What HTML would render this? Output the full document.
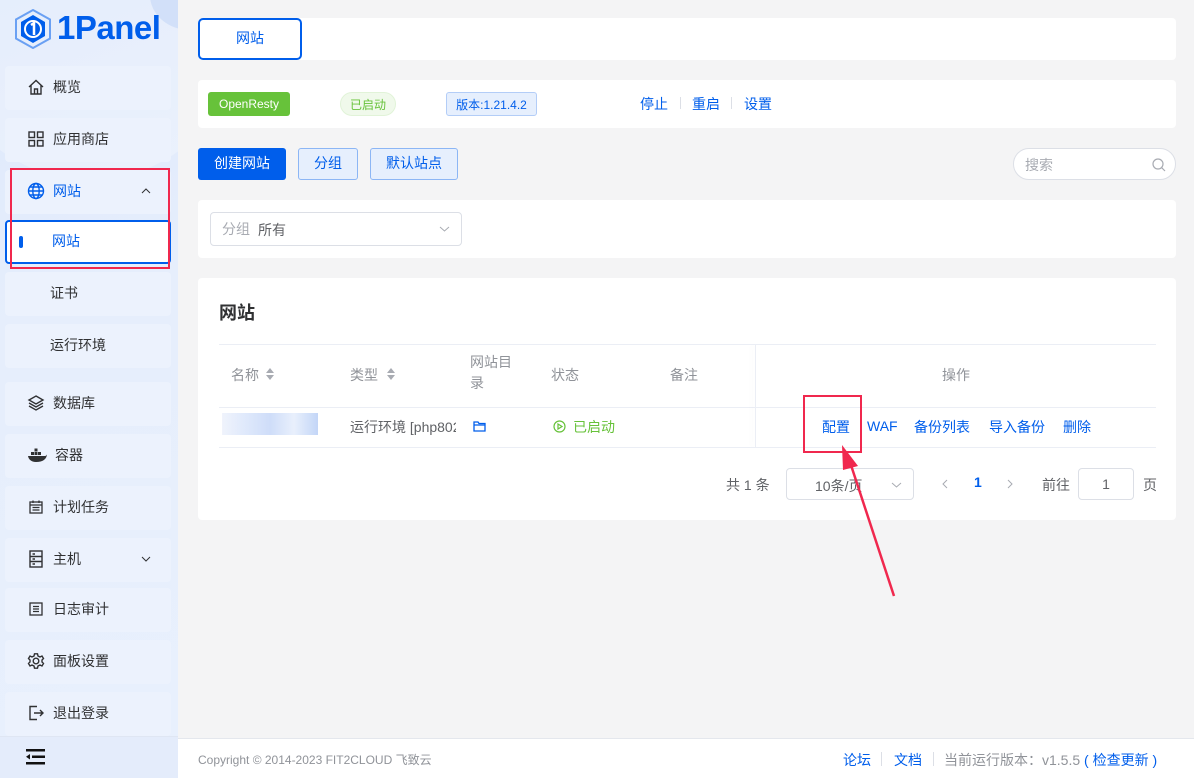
<!DOCTYPE html>
<html><head><meta charset="utf-8">
<style>
*{box-sizing:border-box;margin:0;padding:0}
body{width:1194px;height:778px;overflow:hidden;background:#f4f4f5;font-family:"Liberation Sans","Noto Sans CJK SC",sans-serif;font-size:14px;color:#303133;position:relative}
.abs{position:absolute}
#side{position:absolute;left:0;top:0;width:178px;height:778px;background:linear-gradient(160deg,#dde8fb 0%,#e6eefc 40%,#e8f0fd 100%);overflow:hidden}
.mi{position:absolute;left:5px;width:166px;height:44px;background:#ecf2fd;border-radius:4px;display:flex;align-items:center;padding-left:22px;font-size:14px;color:#303133;padding-bottom:2px}
.mi svg{margin-right:8px}
.mi.sub{padding-left:45px}
.card{position:absolute;background:#fff;border-radius:4px}
.blue{color:#005eeb}
.btn{position:absolute;height:32px;border-radius:3px;display:flex;align-items:center;justify-content:center;font-size:14px;padding-bottom:2px}
.chev{position:absolute}
</style></head><body>
<div id="side">
  <div class="abs" style="left:-60px;top:-120px;width:300px;height:300px;border-radius:50%;background:rgba(255,255,255,0.25)"></div>
  <div class="abs" style="left:150px;top:-40px;width:80px;height:70px;border-radius:50%;background:rgba(190,210,245,0.5)"></div>
  <svg class="abs" style="left:14px;top:9px" width="38" height="40" viewBox="0 0 38 40"><polygon points="19,1 36,10.5 36,29.5 19,39 2,29.5 2,10.5" fill="none" stroke="#6aa0f3" stroke-width="2"/><polygon points="19,6 31,13 31,27 19,34 7,27 7,13" fill="#005eeb"/><circle cx="19" cy="20" r="8" fill="none" stroke="#fff" stroke-width="2"/><path d="M17 16 L20 14 L20 26" stroke="#fff" stroke-width="2.5" fill="none"/></svg>
  <div class="abs" style="left:57px;top:9px;font-size:33px;font-weight:bold;color:#005eeb;letter-spacing:-0.5px">1Panel</div>

  <div class="mi" style="top:66px"><svg width="18" height="18" viewBox="0 0 18 18" fill="none" stroke="#303133" stroke-width="1.4"><path d="M2 9 L9 2.5 L16 9 M4 7.5 V16 H14 V7.5 M7.5 16 V11 H10.5 V16"/></svg>概览</div>
  <div class="mi" style="top:118px"><svg width="18" height="18" viewBox="0 0 18 18" fill="none" stroke="#303133" stroke-width="1.4"><rect x="2" y="2" width="5.5" height="5.5"/><rect x="10.5" y="2" width="5.5" height="5.5"/><rect x="2" y="10.5" width="5.5" height="5.5"/><rect x="10.5" y="10.5" width="5.5" height="5.5"/></svg>应用商店</div>
  <div class="mi blue" style="top:170px"><svg width="18" height="18" viewBox="0 0 18 18" fill="none" stroke="#005eeb" stroke-width="1.4"><circle cx="9" cy="9" r="7.5"/><ellipse cx="9" cy="9" rx="3.2" ry="7.5"/><path d="M1.5 9 H16.5 M3 5 H15 M3 13 H15"/></svg>网站<svg class="chev" style="left:136px;top:18px" width="10" height="6" viewBox="0 0 10 6" fill="none" stroke="#303133" stroke-width="1"><path d="M1 5 L5 1 L9 5"/></svg></div>
  <div class="mi sub blue" style="top:220px;background:#fff;border:2px solid #005eeb;left:5px;width:166px"><span class="abs" style="left:12px;top:14px;width:4px;height:12px;background:#005eeb;border-radius:2px"></span>网站</div>
  <div class="abs" style="left:10px;top:168px;width:160px;height:101px;border:2px solid #f0284e"></div>
  <div class="mi sub" style="top:272px">证书</div>
  <div class="mi sub" style="top:324px">运行环境</div>
  <div class="mi" style="top:382px"><svg width="18" height="18" viewBox="0 0 18 18" fill="none" stroke="#303133" stroke-width="1.4"><path d="M9 2 L16 6 L9 10 L2 6 Z M2 9 L9 13 L16 9 M2 12 L9 16 L16 12"/></svg>数据库</div>
  <div class="mi" style="top:434px"><svg width="20" height="16" viewBox="0 0 20 16" fill="#303133"><rect x="4" y="5" width="3" height="3"/><rect x="7.5" y="5" width="3" height="3"/><rect x="7.5" y="1.5" width="3" height="3"/><rect x="11" y="5" width="3" height="3"/><path d="M1 9 H18 C19 9 19.5 8 20 7.5 C19.5 12 16 15 9 15 C4 15 1.5 12 1 9Z"/></svg>容器</div>
  <div class="mi" style="top:486px"><svg width="18" height="18" viewBox="0 0 18 18" fill="none" stroke="#303133" stroke-width="1.3"><rect x="3" y="4" width="12" height="11"/><path d="M6 2.5 V5 M12 2.5 V5 M3 7 H15 M5.5 9.5 H12.5 M5.5 12 H12.5"/></svg>计划任务</div>
  <div class="mi" style="top:538px"><svg width="18" height="20" viewBox="0 0 18 20" fill="none" stroke="#303133" stroke-width="1.4"><rect x="3" y="2" width="12" height="16"/><path d="M3 7.5 H15 M3 12.5 H15 M5.5 5 H8 M5.5 10 H8 M5.5 15 H8"/></svg>主机<svg class="chev" style="left:136px;top:18px" width="10" height="6" viewBox="0 0 10 6" fill="none" stroke="#303133" stroke-width="1"><path d="M1 1 L5 5 L9 1"/></svg></div>
  <div class="mi" style="top:588px"><svg width="18" height="18" viewBox="0 0 18 18" fill="none" stroke="#303133" stroke-width="1.3"><rect x="3" y="3" width="12" height="12"/><path d="M6 6.5 H12 M6 9 H12 M6 11.5 H12"/></svg>日志审计</div>
  <div class="mi" style="top:640px"><svg width="18" height="18" viewBox="0 0 18 18" fill="none" stroke="#303133" stroke-width="1.4"><circle cx="9" cy="9" r="2.8"/><path d="M7.5 1.8 H10.5 L11 4 L13 5 L15 4 L16.5 6.5 L15 8 V10 L16.5 11.5 L15 14 L13 13 L11 14 L10.5 16.2 H7.5 L7 14 L5 13 L3 14 L1.5 11.5 L3 10 V8 L1.5 6.5 L3 4 L5 5 L7 4 Z"/></svg>面板设置</div>
  <div class="mi" style="top:692px"><svg width="18" height="18" viewBox="0 0 18 18" fill="none" stroke="#303133" stroke-width="1.4"><path d="M10 2.5 H3 V15.5 H10 M7 9 H16 M13 6 L16 9 L13 12"/></svg>退出登录</div>
  <div class="abs" style="left:0;top:736px;width:178px;height:42px;background:#e4ecfb;border-top:1px solid #dfe6f3"></div>
  <svg class="abs" style="left:26px;top:749px" width="20" height="16" viewBox="0 0 20 16" fill="#111"><rect x="0" y="0" width="19" height="2.5"/><rect x="6" y="6.5" width="13" height="2.5"/><rect x="0" y="13" width="19" height="2.5"/><path d="M0 7.8 L4 5 V10.5Z"/></svg>
</div>

<!-- main -->
<div class="card" style="left:198px;top:18px;width:978px;height:42px"></div>
<div class="abs blue" style="left:198px;top:18px;width:104px;height:42px;border:2px solid #005eeb;border-radius:5px;display:flex;align-items:center;justify-content:center;font-size:14px;padding-bottom:2px">网站</div>

<div class="card" style="left:198px;top:80px;width:978px;height:48px"></div>
<div class="abs" style="left:208px;top:92px;width:82px;height:24px;background:#67c23a;color:#fff;border-radius:3px;font-size:12px;display:flex;align-items:center;justify-content:center">OpenResty</div>
<div class="abs" style="left:340px;top:92px;width:56px;height:24px;background:#f0f9eb;border:1px solid #e1f3d8;color:#67c23a;border-radius:12px;font-size:12px;display:flex;align-items:center;justify-content:center">已启动</div>
<div class="abs" style="left:446px;top:92px;width:91px;height:24px;background:#e6effd;border:1px solid #b3cdf7;color:#005eeb;border-radius:3px;font-size:12px;display:flex;align-items:center;justify-content:center">版本:1.21.4.2</div>
<div class="abs blue" style="left:640px;top:94px;font-size:14px">停止</div>
<div class="abs" style="left:680px;top:97px;width:1px;height:12px;background:#dcdfe6"></div>
<div class="abs blue" style="left:692px;top:94px;font-size:14px">重启</div>
<div class="abs" style="left:731px;top:97px;width:1px;height:12px;background:#dcdfe6"></div>
<div class="abs blue" style="left:744px;top:94px;font-size:14px">设置</div>

<div class="btn" style="left:198px;top:148px;width:88px;background:#005eeb;color:#fff">创建网站</div>
<div class="btn blue" style="left:298px;top:148px;width:60px;background:#e6effd;border:1px solid #8cb6f5">分组</div>
<div class="btn blue" style="left:370px;top:148px;width:88px;background:#e6effd;border:1px solid #8cb6f5">默认站点</div>
<div class="abs" style="left:1013px;top:148px;width:163px;height:32px;background:#fff;border:1px solid #dcdfe6;border-radius:16px"><span class="abs" style="left:11px;top:6px;color:#a8abb2;font-size:14px">搜索</span><svg class="abs" style="left:138px;top:9px" width="14" height="14" viewBox="0 0 14 14" fill="none" stroke="#a8abb2" stroke-width="1.2"><circle cx="6" cy="6" r="5"/><path d="M9.7 9.7 L13 13"/></svg></div>

<div class="card" style="left:198px;top:200px;width:978px;height:58px"></div>
<div class="abs" style="left:210px;top:212px;width:252px;height:34px;border:1px solid #dcdfe6;border-radius:4px"><span class="abs" style="left:11px;top:6px;color:#a8abb2">分组</span><span class="abs" style="left:47px;top:7px;color:#606266">所有</span><svg class="abs" style="left:228px;top:13px" width="11" height="6" viewBox="0 0 11 6" fill="none" stroke="#a8abb2" stroke-width="1"><path d="M1 1 L5.5 5 L10 1"/></svg></div>

<div class="card" style="left:198px;top:278px;width:978px;height:242px"></div>
<div class="abs" style="left:219px;top:299px;font-size:18px;font-weight:bold;color:#303133">网站</div>
<div class="abs" style="left:219px;top:344px;width:937px;height:1px;background:#ebeef5"></div>
<div class="abs" style="left:219px;top:407px;width:937px;height:1px;background:#ebeef5"></div>
<div class="abs" style="left:219px;top:447px;width:937px;height:1px;background:#ebeef5"></div>
<div class="abs" style="left:755px;top:345px;width:1px;height:102px;background:#ebeef5;box-shadow:-3px 0 6px rgba(0,0,0,0.06)"></div>
<div class="abs" style="left:231px;top:365px;color:#909399">名称</div>
<svg class="abs" style="left:265px;top:368px" width="10" height="12" viewBox="0 0 10 12" fill="#a8abb2"><path d="M5 0 L9 5 H1Z M5 12 L9 7 H1Z"/></svg>
<div class="abs" style="left:350px;top:365px;color:#909399">类型</div>
<svg class="abs" style="left:386px;top:368px" width="10" height="12" viewBox="0 0 10 12" fill="#a8abb2"><path d="M5 0 L9 5 H1Z M5 12 L9 7 H1Z"/></svg>
<div class="abs" style="left:470px;top:352px;color:#909399;line-height:21px">网站目<br>录</div>
<div class="abs" style="left:551px;top:365px;color:#909399">状态</div>
<div class="abs" style="left:670px;top:365px;color:#909399">备注</div>
<div class="abs" style="left:942px;top:365px;color:#909399">操作</div>
<div class="abs" style="left:222px;top:413px;width:96px;height:22px;background:linear-gradient(90deg,#eef2fb,#dbe6fb,#c9d9f8,#e6eefc,#bcd1f6);opacity:.9"></div>
<div class="abs" style="left:350px;top:417px;color:#606266;width:106px;overflow:hidden;white-space:nowrap">运行环境 [php802</div>
<svg class="abs" style="left:473px;top:421px" width="13" height="11" viewBox="0 0 13 11" fill="none" stroke="#005eeb" stroke-width="1.3"><path d="M1 1 H5 L6 2.5 H12 V10 H1 Z M1 4 H12"/></svg>
<svg class="abs" style="left:553px;top:420px" width="13" height="13" viewBox="0 0 13 13" fill="none" stroke="#67c23a" stroke-width="1.2"><circle cx="6.5" cy="6.5" r="5.5"/><path d="M5 4 L9 6.5 L5 9Z"/></svg>
<div class="abs" style="left:573px;top:417px;color:#67c23a">已启动</div>
<div class="abs blue" style="left:822px;top:417px">配置</div>
<div class="abs blue" style="left:867px;top:418px">WAF</div>
<div class="abs blue" style="left:914px;top:417px">备份列表</div>
<div class="abs blue" style="left:989px;top:417px">导入备份</div>
<div class="abs blue" style="left:1063px;top:417px">删除</div>
<div class="abs" style="left:803px;top:395px;width:59px;height:58px;border:2px solid #f0284e"></div>

<div class="abs" style="left:726px;top:475px;color:#606266">共 1 条</div>
<div class="abs" style="left:786px;top:468px;width:128px;height:32px;border:1px solid #dcdfe6;border-radius:4px"><span class="abs" style="left:28px;top:7px;color:#606266">10条/页</span><svg class="abs" style="left:104px;top:13px" width="11" height="6" viewBox="0 0 11 6" fill="none" stroke="#a8abb2" stroke-width="1"><path d="M1 1 L5.5 5 L10 1"/></svg></div>
<svg class="abs" style="left:942px;top:479px" width="6" height="10" viewBox="0 0 6 10" fill="none" stroke="#a8abb2" stroke-width="1"><path d="M5 1 L1 5 L5 9"/></svg>
<div class="abs blue" style="left:974px;top:474px;font-weight:bold">1</div>
<svg class="abs" style="left:1007px;top:479px" width="6" height="10" viewBox="0 0 6 10" fill="none" stroke="#a8abb2" stroke-width="1"><path d="M1 1 L5 5 L1 9"/></svg>
<div class="abs" style="left:1042px;top:475px;color:#606266">前往</div>
<div class="abs" style="left:1078px;top:468px;width:56px;height:32px;border:1px solid #dcdfe6;border-radius:4px;text-align:center;line-height:30px;color:#606266">1</div>
<div class="abs" style="left:1143px;top:475px;color:#606266">页</div>

<svg class="abs" style="left:0;top:0" width="1194" height="778"><line x1="894" y1="596" x2="848" y2="456" stroke="#f0284e" stroke-width="2.5"/><polygon points="842,445 858,466 843,470" fill="#f0284e"/></svg>

<div class="abs" style="left:178px;top:738px;width:1016px;height:40px;background:#fff;border-top:1px solid #e4e7ed"></div>
<div class="abs" style="left:198px;top:751px;font-size:12px;color:#909399">Copyright © 2014-2023 FIT2CLOUD 飞致云</div>
<div class="abs blue" style="left:843px;top:750px;font-size:14px">论坛</div>
<div class="abs" style="left:881px;top:752px;width:1px;height:14px;background:#dcdfe6"></div>
<div class="abs blue" style="left:894px;top:750px;font-size:14px">文档</div>
<div class="abs" style="left:933px;top:752px;width:1px;height:14px;background:#dcdfe6"></div>
<div class="abs" style="left:944px;top:750px;font-size:14px;color:#909399">当前运行版本：v1.5.5 <span class="blue">( 检查更新 )</span></div>
</body></html>
